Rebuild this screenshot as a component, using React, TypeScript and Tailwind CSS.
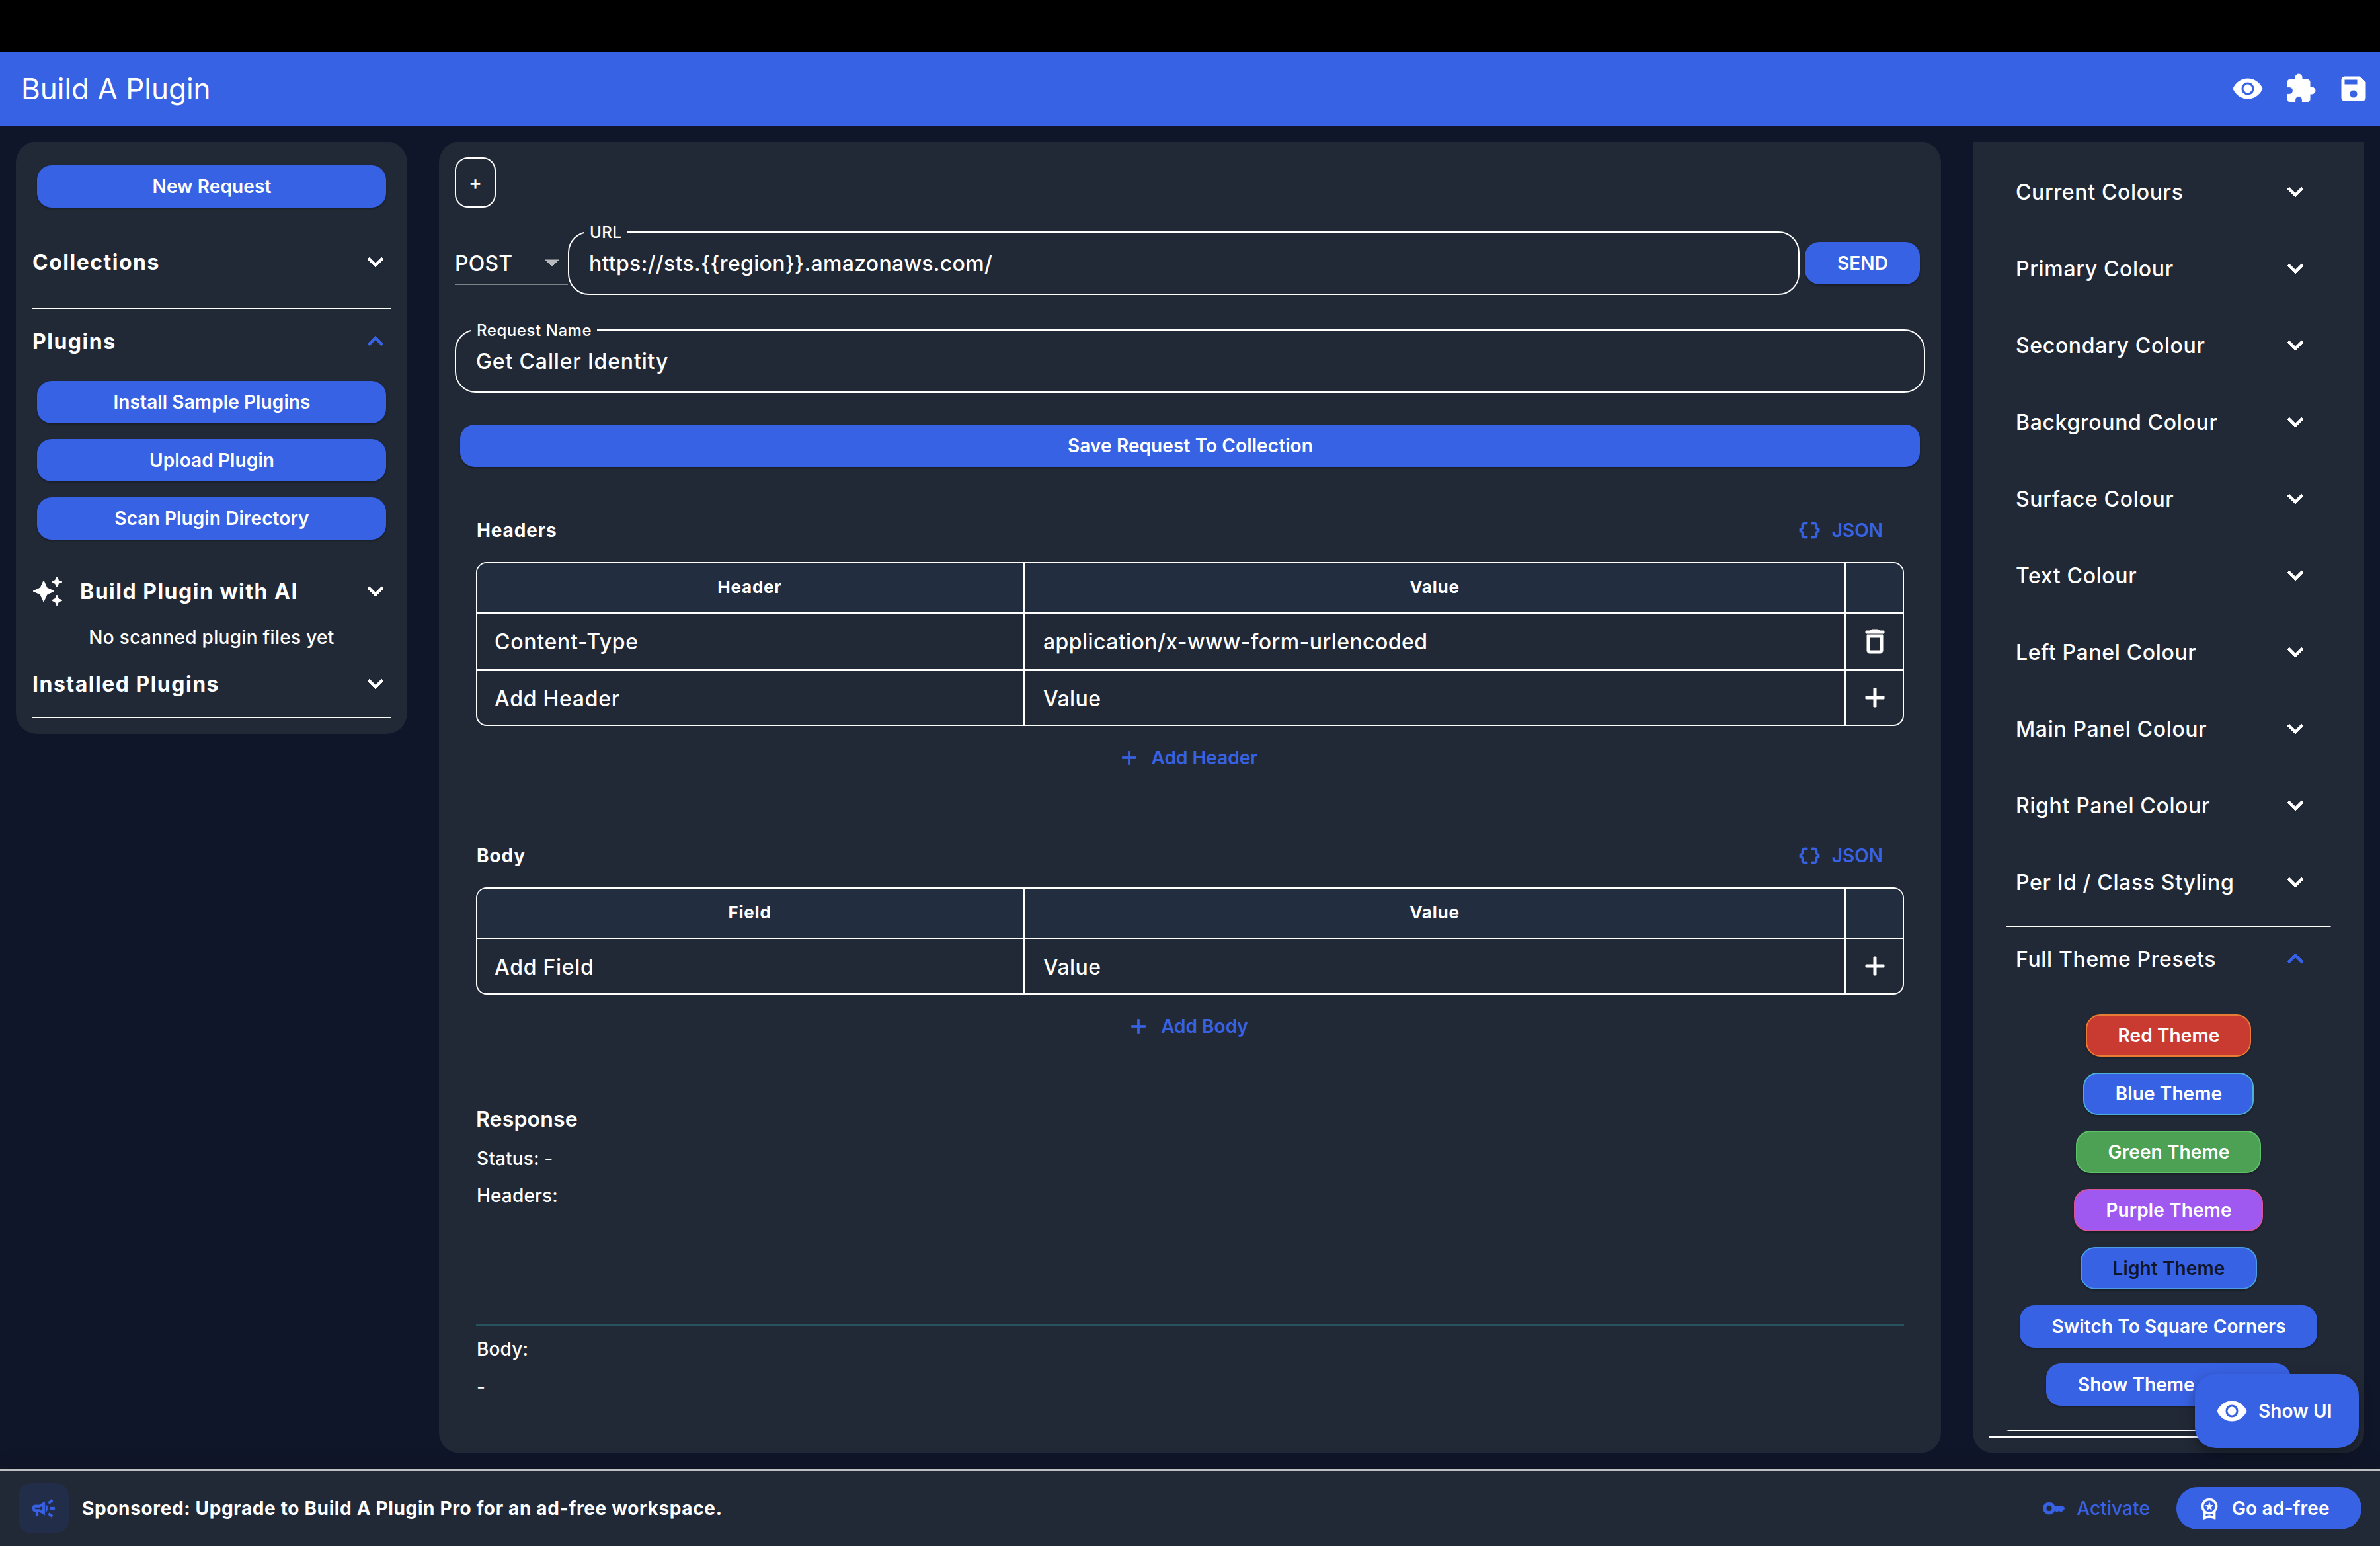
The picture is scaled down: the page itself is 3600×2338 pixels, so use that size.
import type { ReactNode } from "react";
import clsx from "clsx";
import {
  MdAdd,
  MdArrowDropDown,
  MdAutoAwesome,
  MdDataObject,
  MdDeleteOutline,
  MdExpandLess,
  MdExpandMore,
  MdExtension,
  MdKey,
  MdOutlineCampaign,
  MdOutlineWorkspacePremium,
  MdSave,
  MdVisibility,
} from "react-icons/md";

const colourSections = [
  "Current Colours",
  "Primary Colour",
  "Secondary Colour",
  "Background Colour",
  "Surface Colour",
  "Text Colour",
  "Left Panel Colour",
  "Main Panel Colour",
  "Right Panel Colour",
  "Per Id / Class Styling",
];

const themePresets = [
  { label: "Red Theme", className: "w-[250px] border-2 border-[#e87b35] bg-[#c93a31] text-white" },
  { label: "Blue Theme", className: "w-[258px] border-2 border-[#4db0d2] bg-[#3862e4] text-white" },
  { label: "Green Theme", className: "w-[280px] border-2 border-[#5ec269] bg-[#4da154] text-white" },
  { label: "Purple Theme", className: "w-[286px] border-2 border-[#d9539a] bg-[#9f59f0] text-white" },
  { label: "Light Theme", className: "w-[267px] border-2 border-[#4a9de4] bg-[#3862e4] text-[#101629]" },
  { label: "Switch To Square Corners", className: "w-[450px] bg-[#3862e4] text-white" },
];

const PanelButton = ({ children, className }: { children: ReactNode; className?: string }) => (
  <button
    className={clsx(
      "flex h-16 items-center justify-center rounded-[22px] pl-[1px] text-[28px] font-semibold tracking-[0.1px] shadow-[0_2px_3px_rgba(0,0,0,0.3)]",
      className ?? "bg-[#3862e4] text-white"
    )}
  >
    {children}
  </button>
);

const SidebarRow = ({ title, open, icon, className }: { title: string; open?: boolean; icon?: ReactNode; className: string }) => (
  <div className={clsx("flex items-center", className)}>
    {icon}
    <h2 className="flex-1 pt-[2px] pl-[1px] text-[32px] font-bold tracking-[1.5px]">{title}</h2>
    {open ? <MdExpandLess className="size-12 text-[#3862e4]" /> : <MdExpandMore className="size-12" />}
  </div>
);

const OutlinedField = ({ label, value, className }: { label: string; value: string; className?: string }) => (
  <div className={clsx("relative flex h-24 items-center rounded-[32px] border-2 border-white pt-[2px] pl-[30px] font-medium", className)}>
    <span className="absolute -top-[16px] left-[23px] bg-[#222936] px-2 text-[24px] leading-8 tracking-[0.56px]">{label}</span>
    {value}
  </div>
);

const SectionTitle = ({ title }: { title: string }) => (
  <div className="flex h-16 items-center justify-between">
    <h3 className="pl-[1px] text-[28px] font-bold tracking-[0.85px]">{title}</h3>
    <button className="flex items-center gap-4 pr-8 text-[28px] font-semibold text-[#3862e4]">
      <MdDataObject className="size-9" />
      JSON
    </button>
  </div>
);

const AddButton = ({ label }: { label: string }) => (
  <button className="flex h-24 w-full items-center justify-center gap-4 pr-2 text-[28px] font-semibold text-[#3862e4]">
    <MdAdd className="size-9" />
    {label}
  </button>
);

const Cell = ({ children, className }: { children?: ReactNode; className?: string }) => (
  <div className={clsx("flex items-center", className)}>{children}</div>
);

const FieldsTable = ({ name, rows }: { name: string; rows: { name: string; value: string; saved?: boolean }[] }) => (
  <div className="mt-4 overflow-hidden rounded-2xl border-2 border-white">
    <div className="grid h-[74px] grid-cols-[828px_1242px_86px] bg-[#222d3f] text-[26px] font-bold tracking-[0.8px]">
      <Cell className="justify-center border-r-2 border-white pr-[2px] pb-[3px]">{name}</Cell>
      <Cell className="justify-center border-r-2 border-white pb-[3px]">Value</Cell>
      <Cell />
    </div>
    {rows.map((row) => (
      <div
        key={row.name}
        className={clsx(
          "grid grid-cols-[828px_1242px_86px] border-t-2 border-white text-[32px] font-medium",
          row.saved ? "h-[86px]" : "h-[84px]"
        )}
      >
        <Cell className={clsx("border-r-2 border-white pl-[26px] tracking-[0.72px]", row.saved ? "pt-[2px]" : "pt-[4px]")}>{row.name}</Cell>
        <Cell className={clsx("border-r-2 border-white pl-7 tracking-[0.42px]", row.saved ? "pt-[2px]" : "pt-[4px]")}>{row.value}</Cell>
        <Cell className="justify-center pl-[2px]">
          {row.saved ? <MdDeleteOutline className="size-12" /> : <MdAdd className="size-12" />}
        </Cell>
      </div>
    ))}
  </div>
);

const LeftPanel = () => (
  <aside className="flex w-[592px] flex-col self-start rounded-[32px] bg-[#222936] px-6 pt-9 pb-6">
    <div className="flex flex-col px-2">
      <PanelButton>New Request</PanelButton>
    </div>
    <SidebarRow title="Collections" className="mt-3 h-[140px]" />
    <div className="h-[2px] bg-white" />
    <SidebarRow title="Plugins" open className="h-24" />
    <div className="mt-3 flex flex-col gap-6 px-2">
      <PanelButton>Install Sample Plugins</PanelButton>
      <PanelButton>Upload Plugin</PanelButton>
      <PanelButton>Scan Plugin Directory</PanelButton>
    </div>
    <SidebarRow title="Build Plugin with AI" icon={<MdAutoAwesome className="mr-6 size-12" />} className="mt-[30px] h-24" />
    <p className="flex h-11 items-center justify-center text-[28px] font-medium tracking-[0.3px]">No scanned plugin files yet</p>
    <SidebarRow title="Installed Plugins" className="h-24" />
    <div className="mt-[2px] h-[2px] bg-white" />
  </aside>
);

const MainPanel = () => (
  <main className="flex w-[2272px] flex-col rounded-[32px] bg-[#222936] p-6">
    <button className="flex h-[76px] w-[62px] items-center justify-center rounded-[20px] border-2 border-white text-[30px] font-medium">
      +
    </button>

    <div className="mt-9 flex h-24 items-center">
      <div className="flex h-[66px] w-[171px] items-center justify-between border-b-2 border-[#7e8289] text-[32px] font-medium tracking-[0.2px]">
        <span className="pt-[3px]">POST</span>
        <MdArrowDropDown className="size-12 text-[#b7b9bd]" />
      </div>
      <OutlinedField
        label="URL"
        value="https://sts.{{region}}.amazonaws.com/"
        className="flex-1 text-[32px] tracking-[0.3px]"
      />
      <PanelButton className="mx-2 w-[174px] bg-[#3862e4] text-white">SEND</PanelButton>
    </div>

    <OutlinedField label="Request Name" value="Get Caller Identity" className="mt-[52px] text-[32px] tracking-[0.85px]" />

    <div className="mt-12 flex flex-col px-2">
      <PanelButton>Save Request To Collection</PanelButton>
    </div>

    <div className="flex flex-col px-8 pt-16">
      <SectionTitle title="Headers" />
      <FieldsTable
        name="Header"
        rows={[
          { name: "Content-Type", value: "application/x-www-form-urlencoded", saved: true },
          { name: "Add Header", value: "Value" },
        ]}
      />
      <AddButton label="Add Header" />

      <div className="h-[68px]" />
      <SectionTitle title="Body" />
      <FieldsTable name="Field" rows={[{ name: "Add Field", value: "Value" }]} />
      <AddButton label="Add Body" />

      <h3 className="mt-[69px] mb-[15px] h-12 text-[32px] leading-[48px] font-semibold tracking-[0.15px]">Response</h3>
      <div className="flex flex-col pl-[1px] text-[28px] leading-10 font-medium tracking-[0.15px]">
        <p className="mb-4">Status: -</p>
        <p>Headers:</p>
      </div>
      <div className="mt-[175px] h-[2px] bg-[#27525f]" />
      <div className="mt-[15px] flex flex-col gap-[17px] pl-[1px] text-[28px] leading-10 font-medium tracking-[0.15px]">
        <p>Body:</p>
        <p>-</p>
      </div>
    </div>
  </main>
);

const ThemeRow = ({ title, open, className }: { title: string; open?: boolean; className: string }) => (
  <div className={clsx("flex items-center justify-between pr-20 pl-[65px]", className)}>
    <span className="pt-[2px] text-[32px] font-medium tracking-[0.65px]">{title}</span>
    {open ? <MdExpandLess className="size-12 text-[#3862e4]" /> : <MdExpandMore className="size-12" />}
  </div>
);

const RightPanel = () => (
  <aside className="flex w-[592px] flex-col rounded-b-[32px] bg-[#222936] pt-[18px]">
    {colourSections.map((title) => (
      <ThemeRow key={title} title={title} className="h-[116px]" />
    ))}
    <div className="mx-[50px] mt-2 h-[2px] rounded-t-[8px_2px] bg-white" />
    <ThemeRow title="Full Theme Presets" open className="h-24" />
    <div className="mt-9 flex flex-col items-center gap-6">
      {themePresets.map((preset) => (
        <PanelButton key={preset.label} className={preset.className}>
          {preset.label}
        </PanelButton>
      ))}
      <button className="flex h-16 w-[370px] items-center rounded-[22px] bg-[#3862e4] pl-12 text-[28px] font-semibold shadow-[0_2px_3px_rgba(0,0,0,0.3)]">
        Show Theme
      </button>
    </div>
    <div className="mx-[50px] mt-9 h-[2px] rounded-b-[8px_2px] bg-white" />
    <div className="mx-6 mt-2 h-[2px] bg-white" />
  </aside>
);

export default function App() {
  return (
    <div className="relative flex h-[2338px] w-[3600px] flex-col overflow-hidden bg-[#101629] font-['Inter',sans-serif] text-white antialiased [&_path:not([fill=none])]:[stroke-width:0.5px]">
      <div className="h-[78px] bg-black" />
      <header className="flex h-28 items-center bg-[#3862e4] pr-4 pl-8">
        <h1 className="flex-1 text-[44px]">Build A Plugin</h1>
        <div className="flex gap-8">
          <MdVisibility className="size-12" />
          <MdExtension className="size-12" />
          <MdSave className="size-12" />
        </div>
      </header>

      <div className="flex flex-1 gap-12 p-6">
        <LeftPanel />
        <MainPanel />
        <RightPanel />
      </div>

      <footer className="flex h-[116px] items-center border-t-2 border-[#bdbfc3] bg-[#222936] px-7 shadow-[0_-8px_24px_rgba(0,0,0,0.12)]">
        <div className="flex size-[76px] items-center justify-center rounded-[20px] bg-[#222d49]">
          <MdOutlineCampaign className="size-10 text-[#3862e4]" />
        </div>
        <p className="ml-5 flex-1 text-[28px] font-bold tracking-[0.64px]">
          Sponsored: Upgrade to Build A Plugin Pro for an ad-free workspace.
        </p>
        <button className="mr-10 flex items-center gap-4 text-[28px] font-medium tracking-[0.1px] text-[#3862e4]">
          <MdKey className="size-9" />
          Activate
        </button>
        <button className="flex h-16 w-[280px] items-center gap-4 rounded-full bg-[#3862e4] pl-8 text-[28px] font-semibold tracking-[0.15px]">
          <MdOutlineWorkspacePremium className="size-9" />
          Go ad-free
        </button>
      </footer>

      {/* floating toggle over the right panel */}
      <button className="absolute right-8 bottom-[148px] flex h-28 w-[248px] items-center gap-4 rounded-[32px] bg-[#3862e4] pl-8 text-[28px] font-semibold tracking-[0.1px] shadow-[0_8px_20px_rgba(0,0,0,0.35)]">
        <MdVisibility className="size-12" />
        Show UI
      </button>
    </div>
  );
}
